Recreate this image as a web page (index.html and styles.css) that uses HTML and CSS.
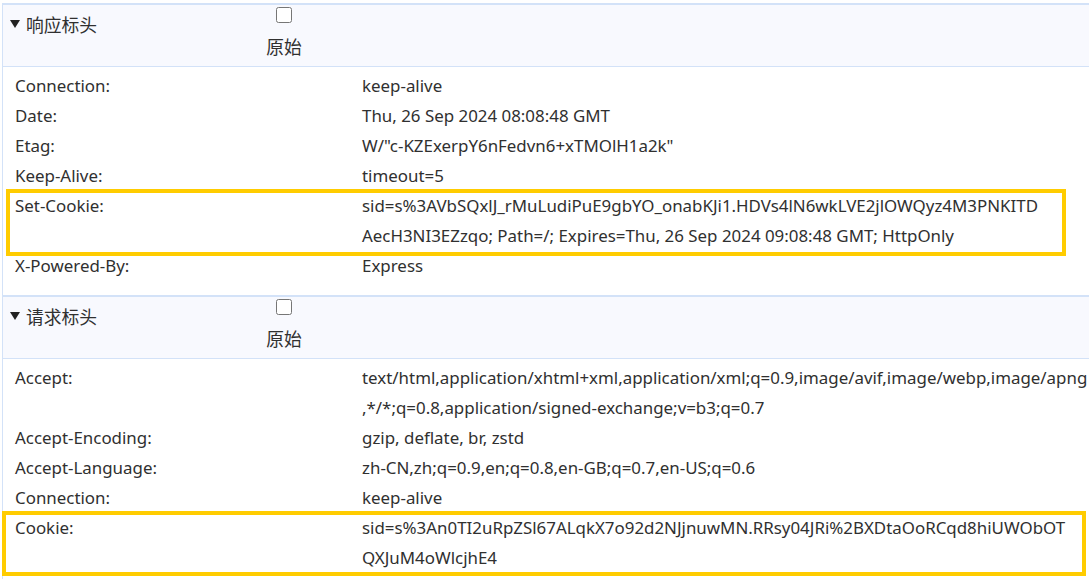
FILE: index.html
```html
<!DOCTYPE html>
<html lang="zh-CN">
<head>
<meta charset="utf-8">
<title>Headers</title>
<link rel="stylesheet" href="styles.css">
</head>
<body>
<div class="panel">
  <section class="sec">
    <div class="sec-head">
      <div class="sec-title"><svg class="tri" width="10" height="8" viewBox="0 0 10 8"><polygon points="0,0 10,0 5,8" fill="#222"/></svg><span>响应标头</span></div>
      <label class="raw"><input type="checkbox" class="cb"><span>原始</span></label>
    </div>
    <div class="rows">
      <div class="row"><div class="k">Connection:</div><div class="v">keep-alive</div></div>
      <div class="row"><div class="k">Date:</div><div class="v">Thu, 26 Sep 2024 08:08:48 GMT</div></div>
      <div class="row"><div class="k">Etag:</div><div class="v">W/"c-KZExerpY6nFedvn6+xTMOlH1a2k"</div></div>
      <div class="row"><div class="k">Keep-Alive:</div><div class="v">timeout=5</div></div>
      <div class="row mark mark-a"><div class="k">Set-Cookie:</div><div class="v">sid=s%3AVbSQxlJ_rMuLudiPuE9gbYO_onabKJi1.HDVs4lN6wkLVE2jlOWQyz4M3PNKITD<br>AecH3NI3EZzqo; Path=/; Expires=Thu, 26 Sep 2024 09:08:48 GMT; HttpOnly</div></div>
      <div class="row"><div class="k">X-Powered-By:</div><div class="v">Express</div></div>
    </div>
  </section>
  <section class="sec">
    <div class="sec-head">
      <div class="sec-title"><svg class="tri" width="10" height="8" viewBox="0 0 10 8"><polygon points="0,0 10,0 5,8" fill="#222"/></svg><span>请求标头</span></div>
      <label class="raw"><input type="checkbox" class="cb"><span>原始</span></label>
    </div>
    <div class="rows">
      <div class="row"><div class="k">Accept:</div><div class="v">text/html,application/xhtml+xml,application/xml;q=0.9,image/avif,image/webp,image/apng<br>,*/*;q=0.8,application/signed-exchange;v=b3;q=0.7</div></div>
      <div class="row"><div class="k">Accept-Encoding:</div><div class="v">gzip, deflate, br, zstd</div></div>
      <div class="row"><div class="k">Accept-Language:</div><div class="v">zh-CN,zh;q=0.9,en;q=0.8,en-GB;q=0.7,en-US;q=0.6</div></div>
      <div class="row"><div class="k">Connection:</div><div class="v">keep-alive</div></div>
      <div class="row mark mark-b"><div class="k">Cookie:</div><div class="v">sid=s%3An0TI2uRpZSl67ALqkX7o92d2NJjnuwMN.RRsy04JRi%2BXDtaOoRCqd8hiUWObOT<br>QXJuM4oWlcjhE4</div></div>
    </div>
  </section>
</div>
</body>
</html>
```

FILE: styles.css
```css
html, body {
  margin: 0;
  padding: 0;
  background: #ffffff;
}

body {
  font-family: "Noto Sans", "Noto Sans CJK SC", sans-serif;
  font-size: 16.9px;
  color: #303030;
  overflow: hidden;
}

.panel {
  margin: 3px 0 0 2px;
  border-left: 1px solid #d3e2f8;
}

.sec-head {
  display: flex;
  align-items: flex-start;
  height: 61px;
  background: #f8f9fe;
  border-top: 2px solid #d3e2f8;
  border-bottom: 1px solid #d3e2f8;
}

.sec-title {
  display: flex;
  align-items: center;
  gap: 6px;
  width: 246px;
  padding-left: 7px;
  margin-top: 4px;
  height: 30px;
  line-height: 30px;
  font-family: "Noto Sans CJK SC", sans-serif;
  font-size: 17.8px;
}

.tri {
  display: block;
  flex: none;
}

.raw {
  display: flex;
  flex-direction: column;
  align-items: center;
  width: 56px;
  font-family: "Noto Sans CJK SC", sans-serif;
  font-size: 17.8px;
}

.cb {
  width: 16px;
  height: 16px;
  margin: 2px 0 0 0;
}

.raw span {
  margin-top: 10px;
  line-height: 26px;
}

.rows {
  padding: 4px 0 14px 0;
}

.row {
  position: relative;
  display: grid;
  grid-template-columns: 347px 1fr;
  padding-left: 12px;
  line-height: 30px;
}

.v {
  white-space: nowrap;
}

.mark::after {
  content: "";
  position: absolute;
  border: 4px solid #ffcc00;
  pointer-events: none;
}

.mark-a::after {
  left: 3px;
  top: -2px;
  width: 1052px;
  height: 59px;
}

.mark-b::after {
  left: -1px;
  top: -2px;
  width: 1076px;
  height: 57px;
}
```
